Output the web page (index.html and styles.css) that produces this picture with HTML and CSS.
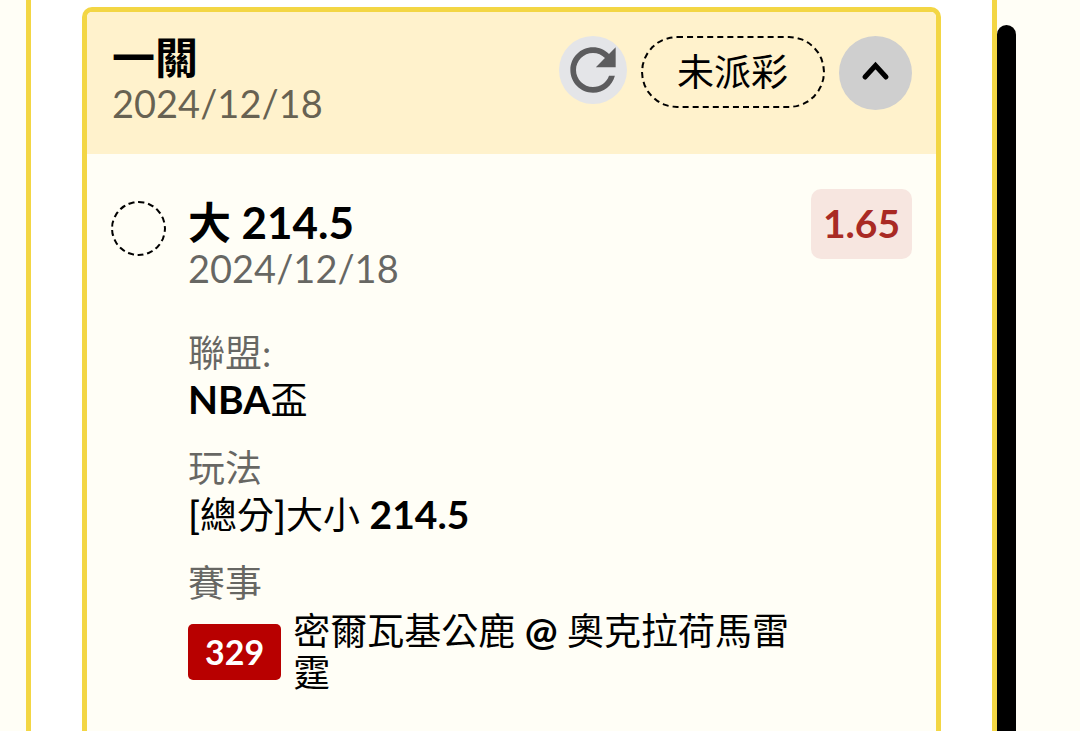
FILE: index.html
```html
<!DOCTYPE html>
<html lang="zh-Hant">
  <head>
    <meta charset="UTF-8">
    <meta name="viewport" content="width=device-width, initial-scale=1.0">
    <title>一關</title>
    <link rel="stylesheet" href="styles.css">
  </head>
  <body>
    <main class="panel">
      <article class="card">
        <header class="card-header">
          <div class="heading">
            <h1 class="title">一關</h1>
            <time class="date" datetime="2024-12-18">2024/12/18</time>
          </div>
          <div class="actions">
            <button class="refresh" type="button" aria-label="重新整理">
              <svg viewBox="0 0 24 24" width="68" height="68">
                <path fill="#5c5c5e" d="M17.650 6.350C16.200 4.900 14.210 4 12 4c-4.420 0-7.990 3.580-7.990 8s3.570 8 7.990 8c3.730 0 6.840-2.550 7.730-6h-2.080c-.82 2.330-3.040 4-5.650 4-3.310 0-6-2.690-6-6s2.690-6 6-6c1.660 0 3.140.69 4.220 1.780L13 11h7V4l-2.350 2.350z"/>
              </svg>
            </button>
            <span class="status">未派彩</span>
            <button class="toggle" type="button" aria-label="收合" aria-expanded="true">
              <svg viewBox="0 0 73 74" width="73" height="74">
                <path d="M26 41L36.500 29.500L47 41" fill="none" stroke="#000" stroke-width="5" stroke-linecap="round"/>
              </svg>
            </button>
          </div>
        </header>

        <section class="bet">
          <span class="bet-mark"></span>
          <div class="bet-info">
            <h2 class="title">大 <span class="num">214.5</span></h2>
            <time class="date" datetime="2024-12-18">2024/12/18</time>
            <dl class="details">
              <div class="detail">
                <dt>聯盟:</dt>
                <dd><b>NBA</b>盃</dd>
              </div>
              <div class="detail">
                <dt>玩法</dt>
                <dd><span class="bracket">[</span>總分<span class="bracket">]</span>大小 <b>214.5</b></dd>
              </div>
              <div class="detail">
                <dt>賽事</dt>
                <dd class="match">
                  <span class="match-no">329</span>
                  <span class="teams">密爾瓦基公鹿 <b>@</b> 奧克拉荷馬雷霆</span>
                </dd>
              </div>
            </dl>
          </div>
          <span class="odds">1.65</span>
        </section>
      </article>
    </main>
    <div class="scrollbar"></div>
  </body>
</html>
```

FILE: styles.css
```css
* {
  box-sizing: border-box;
}
body {
  display: flex;
  height: 100vh;
  margin: 0;
  padding: 0 64px 0 26px;
  overflow: hidden;
  background: #fffef6;
  color: #000;
  font-family: Lato, 'Noto Sans CJK TC', sans-serif;
  font-size: 37px;
  line-height: 46px;
}
h1, h2, dl, dd {
  margin: 0;
}
button {
  padding: 0;
  border: 0;
  border-radius: 50%;
  cursor: pointer;
}
svg {
  display: block;
}

.panel {
  flex: 1;
  display: flex;
  padding: 7px 51px 0;
  background: #fff;
  border: solid #f3d644;
  border-width: 0 5px;
}
.scrollbar {
  width: 19px;
  margin-top: 25px;
  background: #000;
  border-radius: 10px 10px 0 0;
}

.card {
  flex: 1;
  background: #fffef6;
  border: 5px solid #f3d644;
  border-bottom: 0;
  border-radius: 10px 10px 0 0;
}
.card-header {
  display: flex;
  justify-content: space-between;
  padding: 23px 24px 29px 25px;
  background: #fff2cc;
  border-radius: 5px 5px 0 0;
}
.title {
  font-size: 43px;
  font-weight: 700;
  line-height: 46px;
}
.num {
  font-size: 44px;
}
.date {
  display: block;
  color: rgba(0, 0, 0, 0.6);
  font-size: 38px;
  line-height: 44px;
}

.actions {
  display: flex;
  align-items: flex-start;
  gap: 14px;
  padding-top: 1px;
}
.refresh {
  background: #e4e5e8;
}
.status {
  padding: 11px 35px 11px 34px;
  border: 2px dashed #000;
  border-radius: 36px;
}
.toggle {
  background: #cfcfcf;
}

.bet {
  display: flex;
  align-items: flex-start;
  padding: 35px 24px;
}
.bet-mark {
  width: 55px;
  height: 55px;
  margin: 12px 22px 0 0;
  border: 2px dashed #000;
  border-radius: 50%;
}
.bet-info {
  flex: 1;
  padding-top: 10px;
}
.details {
  display: grid;
  gap: 22px;
  margin-top: 40px;
}
.details dt {
  color: rgba(0, 0, 0, 0.6);
}
.details b {
  font-size: 39px;
}
.bracket {
  font-size: 39px;
  font-weight: 500;
}
.match {
  display: flex;
  align-items: center;
  gap: 12px;
  padding-top: 3px;
}
.match-no {
  padding: 5px 17px;
  background: #b80000;
  border-radius: 5px;
  color: #fff;
  font-size: 34px;
  font-weight: 700;
}
.teams {
  line-height: 42px;
}
.odds {
  padding: 11px 12px 13px;
  background: #f7e6e0;
  border-radius: 10px;
  color: #a92a24;
  font-size: 39px;
  font-weight: 700;
}
```
